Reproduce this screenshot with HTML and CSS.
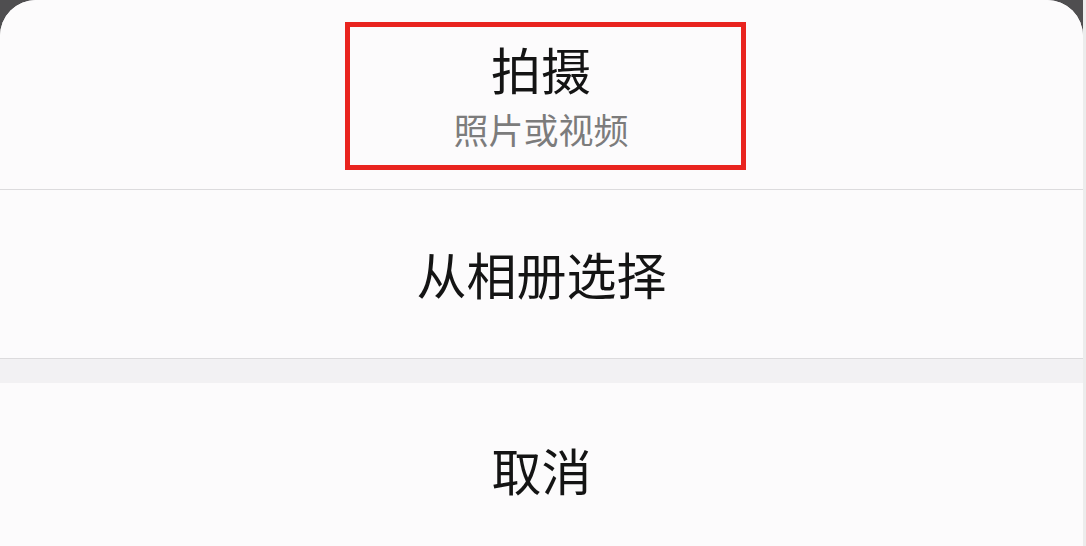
FILE: index.html
```html
<!DOCTYPE html>
<html lang="zh-CN">
<head>
<meta charset="utf-8">
<title>Action sheet</title>
<link rel="stylesheet" href="styles.css">
</head>
<body>
<div class="frame">
  <div class="sheet">
    <div class="item item-top">
      <div class="highlight">
        <div class="title">拍摄</div>
        <div class="subtitle">照片或视频</div>
      </div>
    </div>
    <div class="item item-mid">
      <div class="title">从相册选择</div>
    </div>
    <div class="gap"></div>
    <div class="item item-cancel">
      <div class="title">取消</div>
    </div>
  </div>
  <div class="strip"></div>
</div>
</body>
</html>
```

FILE: styles.css
```css
html, body {
  margin: 0;
  padding: 0;
  height: 100%;
  overflow: hidden;
}
body {
  font-family: "Noto Sans CJK SC", "Noto Sans", sans-serif;
  background: #4f4e50;
}
.frame {
  display: flex;
  height: 546px;
}
.sheet {
  flex: 1;
  display: flex;
  flex-direction: column;
  background: #fcfbfc;
  border-radius: 36px 36px 0 0;
  overflow: hidden;
}
.strip {
  width: 3px;
  background: #ececec;
}
.item {
  text-align: center;
  background: #fcfbfc;
  flex-shrink: 0;
}
.title {
  font-size: 50px;
  line-height: 56px;
  color: #141414;
}
.subtitle {
  font-size: 35px;
  line-height: 40px;
  color: #7c7c7c;
  margin-top: 13px;
}
.item-top {
  height: 190px;
  box-sizing: border-box;
  padding-top: 22px;
  border-bottom: 1px solid #dcdbdd;
}
.highlight {
  margin-left: 345px;
  width: 401px;
  height: 148px;
  box-sizing: border-box;
  border: 5px solid #e9241f;
  padding-top: 13px;
  padding-right: 9px;
}
.item-mid {
  height: 169px;
  box-sizing: border-box;
  padding-top: 55px;
  border-bottom: 1px solid #dcdbdd;
}
.gap {
  height: 24px;
  flex-shrink: 0;
  background: #f2f1f3;
}
.item-cancel {
  flex: 1;
  padding-top: 58px;
}
```
